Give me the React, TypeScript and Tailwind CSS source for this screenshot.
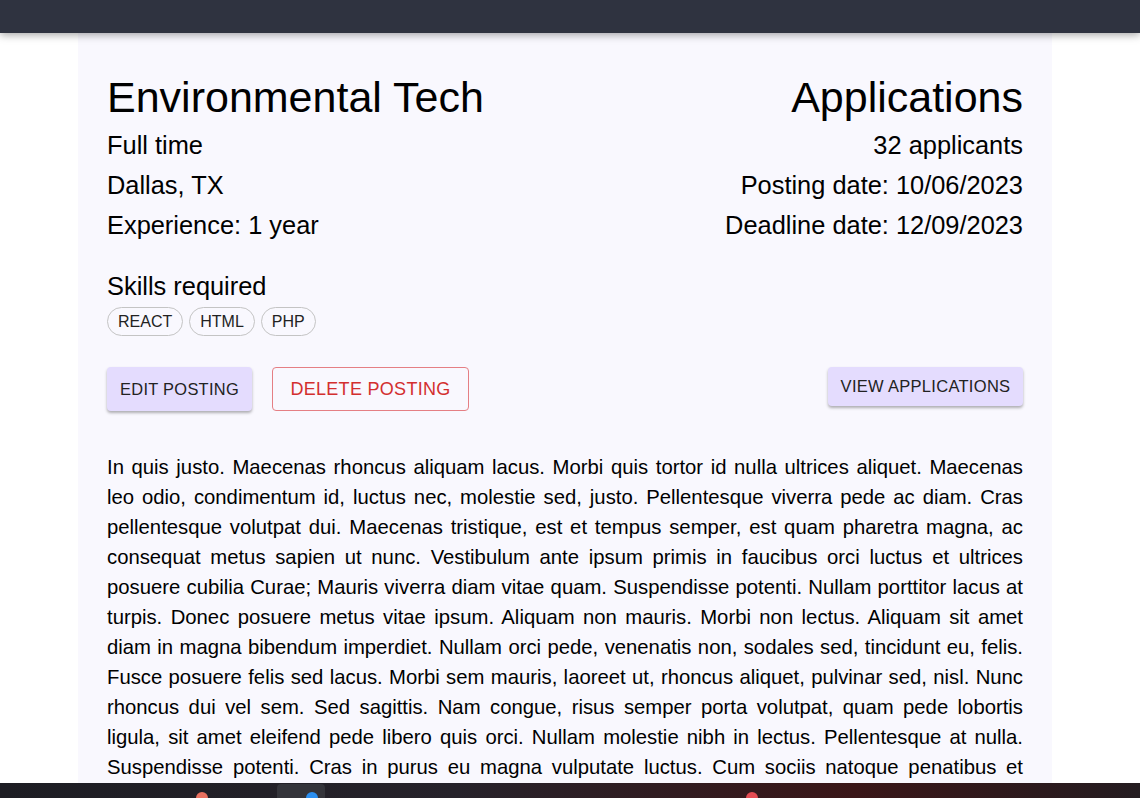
const SKILLS = ["REACT", "HTML", "PHP"];

const DESCRIPTION =
  "In quis justo. Maecenas rhoncus aliquam lacus. Morbi quis tortor id nulla ultrices aliquet. Maecenas leo odio, condimentum id, luctus nec, molestie sed, justo. Pellentesque viverra pede ac diam. Cras pellentesque volutpat dui. Maecenas tristique, est et tempus semper, est quam pharetra magna, ac consequat metus sapien ut nunc. Vestibulum ante ipsum primis in faucibus orci luctus et ultrices posuere cubilia Curae; Mauris viverra diam vitae quam. Suspendisse potenti. Nullam porttitor lacus at turpis. Donec posuere metus vitae ipsum. Aliquam non mauris. Morbi non lectus. Aliquam sit amet diam in magna bibendum imperdiet. Nullam orci pede, venenatis non, sodales sed, tincidunt eu, felis. Fusce posuere felis sed lacus. Morbi sem mauris, laoreet ut, rhoncus aliquet, pulvinar sed, nisl. Nunc rhoncus dui vel sem. Sed sagittis. Nam congue, risus semper porta volutpat, quam pede lobortis ligula, sit amet eleifend pede libero quis orci. Nullam molestie nibh in lectus. Pellentesque at nulla. Suspendisse potenti. Cras in purus eu magna vulputate luctus. Cum sociis natoque penatibus et magnis dis parturient montes, nascetur ridiculus mus.";

export default function App() {
  return (
    <div className="h-screen w-full flex flex-col bg-white overflow-hidden font-['Liberation_Sans',Arial,sans-serif] text-black">
      {/* top bar */}
      <div className="h-[33px] shrink-0 bg-[#2f3340] shadow-[0_2px_8px_rgba(0,0,0,0.35)] relative z-10" />

      <div className="flex-1 min-h-0 overflow-hidden">
        <div className="w-[974px] ml-[78px] bg-[#f9f8fe] px-[29px] pt-[39px] pb-10">
          {/* header */}
          <div className="flex justify-between">
            <div className="flex flex-col">
              <h1 className="text-[43px] leading-[50px]">Environmental Tech</h1>
              <p className="text-[25.4px] leading-[40px] mt-[3px]">Full time</p>
              <p className="text-[25.4px] leading-[40px]">Dallas, TX</p>
              <p className="text-[25.4px] leading-[40px]">Experience: 1 year</p>
            </div>
            <div className="flex flex-col items-end text-right">
              <h2 className="text-[43px] leading-[50px]">Applications</h2>
              <p className="text-[25.4px] leading-[40px] mt-[3px]">32 applicants</p>
              <p className="text-[25.4px] leading-[40px]">Posting date: 10/06/2023</p>
              <p className="text-[25.4px] leading-[40px]">Deadline date: 12/09/2023</p>
            </div>
          </div>

          {/* skills */}
          <div className="mt-[26px]">
            <h3 className="text-[25.4px] leading-[30px]">Skills required</h3>
            <div className="flex gap-[6px] mt-[6px]">
              {SKILLS.map((s) => (
                <span
                  key={s}
                  className="h-[29px] px-[10px] flex items-center rounded-full border border-[#c4c4c4] text-[16px] text-[#222]"
                >
                  {s}
                </span>
              ))}
            </div>
          </div>

          {/* actions */}
          <div className="flex justify-between items-start mt-[31px]">
            <div className="flex gap-5">
              <button className="h-[44px] w-[145px] rounded bg-[#e4dcfe] text-[16.4px] tracking-[0.3px] text-[#222] shadow-[0_2px_3px_rgba(0,0,0,0.3)]">
                EDIT POSTING
              </button>
              <button className="h-[44px] w-[197px] rounded border border-[#e57f84] text-[18px] tracking-[0.3px] text-[#d32f2f]">
                DELETE POSTING
              </button>
            </div>
            <button className="h-[39px] w-[195px] rounded bg-[#e4dcfe] text-[16.5px] tracking-[0.3px] text-[#222] shadow-[0_2px_3px_rgba(0,0,0,0.3)]">
              VIEW APPLICATIONS
            </button>
          </div>

          {/* description */}
          <p className="mt-[41px] text-[20.3px] leading-[30px] text-justify">{DESCRIPTION}</p>
        </div>
      </div>

      {/* taskbar strip */}
      <div className="h-[15px] shrink-0 relative overflow-hidden bg-[linear-gradient(90deg,#1d1d23_0%,#26222a_40%,#3a1618_75%,#241c20_100%)]">
        <span className="absolute left-[196px] top-[9px] w-3 h-3 rounded-full bg-[#e8705f]" />
        <span className="absolute left-[277px] top-[1px] w-[48px] h-[20px] rounded bg-[#34343a]" />
        <span className="absolute left-[306px] top-[9px] w-3 h-3 rounded-full bg-[#2b8ff0]" />
        <span className="absolute left-[746px] top-[9px] w-3 h-3 rounded-full bg-[#e34b52]" />
      </div>
    </div>
  );
}
